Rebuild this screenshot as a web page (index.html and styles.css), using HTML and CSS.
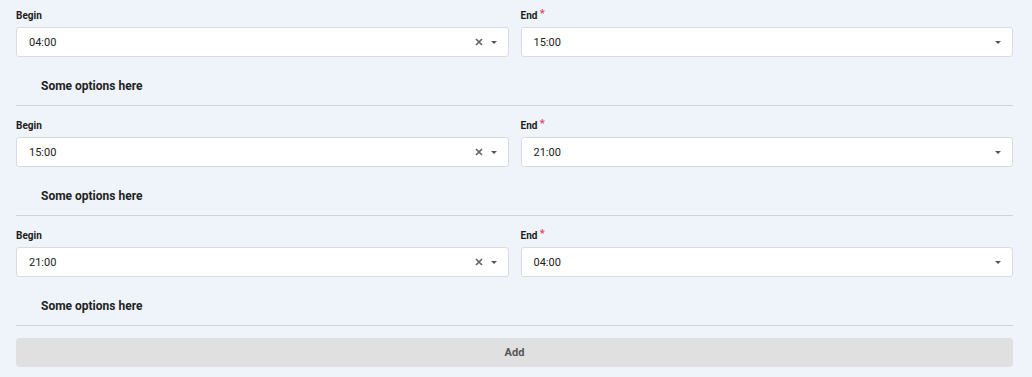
FILE: index.html
```html
<!DOCTYPE html>
<html lang="en">
<head>
    <meta charset="UTF-8">
    <meta name="viewport" content="width=device-width, initial-scale=1.0">
    <title>Schedule</title>
    <link rel="stylesheet" href="styles.css">
</head>
<body>
    <div class="list">
        <div class="slot">
            <div class="fields">
                <div class="field">
                    <label class="label">Begin</label>
                    <div class="select">
                        <span class="value">04:00</span>
                        <svg class="clear" width="8" height="8" viewBox="0 0 8 8"><path d="M1 1L7 7M7 1L1 7"/></svg>
                        <span class="caret"></span>
                    </div>
                </div>
                <div class="field">
                    <label class="label">End <span class="req">*</span></label>
                    <div class="select">
                        <span class="value">15:00</span>
                        <span class="caret"></span>
                    </div>
                </div>
            </div>
            <div class="options">Some options here</div>
        </div>
        <div class="slot">
            <div class="fields">
                <div class="field">
                    <label class="label">Begin</label>
                    <div class="select">
                        <span class="value">15:00</span>
                        <svg class="clear" width="8" height="8" viewBox="0 0 8 8"><path d="M1 1L7 7M7 1L1 7"/></svg>
                        <span class="caret"></span>
                    </div>
                </div>
                <div class="field">
                    <label class="label">End <span class="req">*</span></label>
                    <div class="select">
                        <span class="value">21:00</span>
                        <span class="caret"></span>
                    </div>
                </div>
            </div>
            <div class="options">Some options here</div>
        </div>
        <div class="slot">
            <div class="fields">
                <div class="field">
                    <label class="label">Begin</label>
                    <div class="select">
                        <span class="value">21:00</span>
                        <svg class="clear" width="8" height="8" viewBox="0 0 8 8"><path d="M1 1L7 7M7 1L1 7"/></svg>
                        <span class="caret"></span>
                    </div>
                </div>
                <div class="field">
                    <label class="label">End <span class="req">*</span></label>
                    <div class="select">
                        <span class="value">04:00</span>
                        <span class="caret"></span>
                    </div>
                </div>
            </div>
            <div class="options">Some options here</div>
        </div>
        <button class="add">Add</button>
    </div>
</body>
</html>
```

FILE: styles.css
```css
body {
    margin: 0;
    background-color: #eff4fb;
    font-family: Roboto, "Liberation Sans", sans-serif;
    color: #222;
}
.list {
    padding: 0 19px 0 16px;
}
.slot {
    padding-top: 10px;
    border-bottom: 1px solid #cfd3da;
    margin-bottom: 4px;
}
.fields {
    display: grid;
    grid-template-columns: 1fr 1fr;
    gap: 12px;
}
.field {
    display: flex;
    flex-direction: column;
}
.label {
    font-size: 10px;
    font-weight: 700;
    line-height: 12px;
    height: 12px;
    margin-bottom: 5px;
    color: #1c1c1c;
}
.req {
    color: #e8415f;
    font-size: 11px;
    position: relative;
    top: -2px;
}
.select {
    height: 28px;
    background: #fff;
    border: 1px solid #d9dbdf;
    border-radius: 3px;
    display: flex;
    align-items: center;
    padding: 0 11px 0 12px;
    font-size: 11px;
}
.value {
    flex: 1;
}
.clear {
    stroke: #666;
    stroke-width: 1.7;
    margin-right: 8px;
}
.caret {
    width: 0;
    height: 0;
    border-left: 3.5px solid transparent;
    border-right: 3.5px solid transparent;
    border-top: 3.5px solid #555;
}
.options {
    font-size: 12px;
    font-weight: 700;
    line-height: 14px;
    padding: 22px 25px 12px;
    color: #222;
}
.add {
    display: block;
    width: 100%;
    height: 29px;
    margin-top: 12px;
    border: none;
    border-radius: 4px;
    background: #e0e0e1;
    font-family: Roboto, "Liberation Sans", sans-serif;
    font-size: 11px;
    font-weight: 700;
    color: #555;
}
```
